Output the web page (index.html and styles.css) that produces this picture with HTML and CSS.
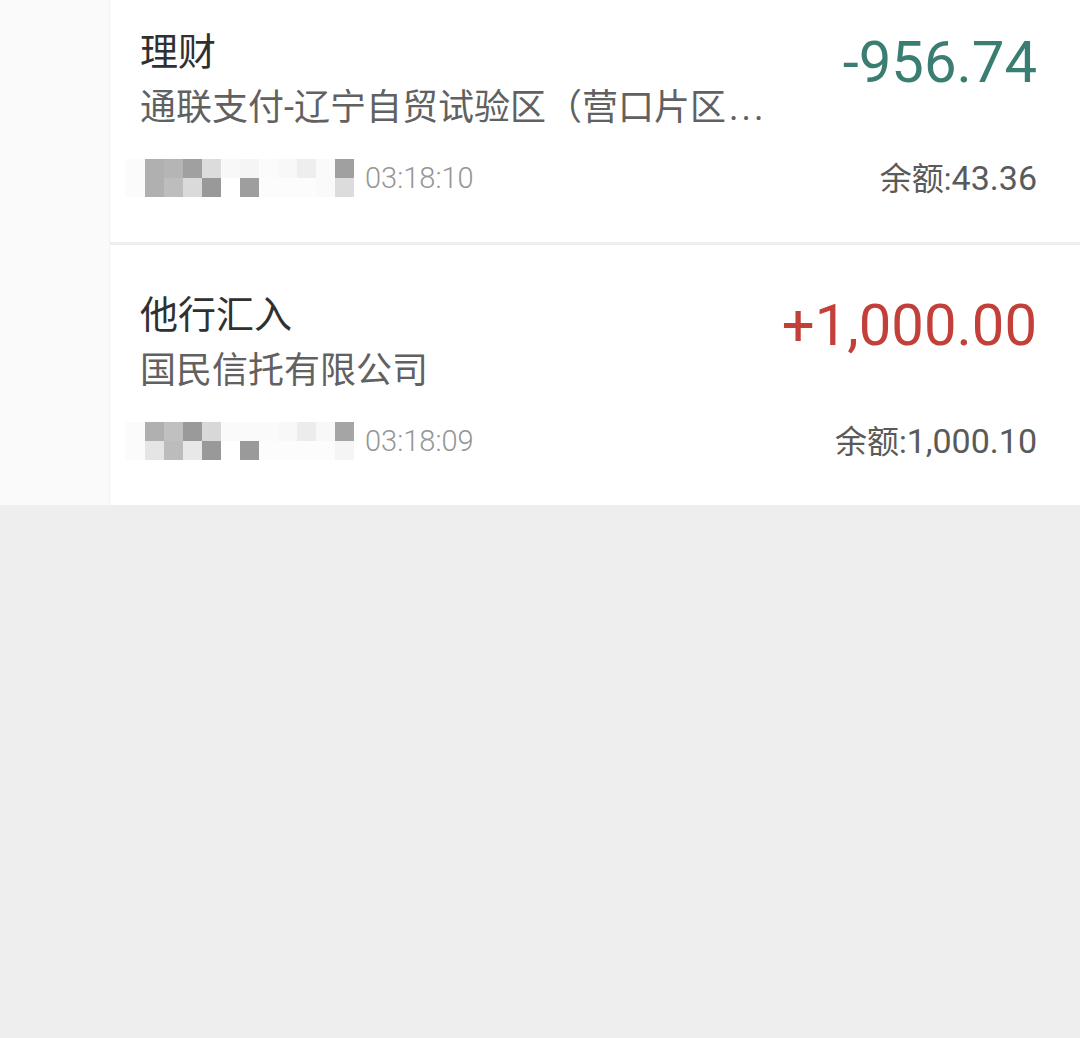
FILE: index.html
```html
<!DOCTYPE html>
<html lang="zh-CN">
<head>
<meta charset="utf-8">
<title>交易明细</title>
<link rel="stylesheet" href="styles.css">
</head>
<body>
<div class="page">
  <aside class="side"></aside>
  <div class="list">
    <div class="card first">
      <div class="top">
        <div class="info">
          <div class="title">理财</div>
          <div class="sub">通联支付-辽宁自贸试验区（营口片区<span class="dots">...</span></div>
        </div>
        <div class="amount out">-956.74</div>
      </div>
      <div class="meta">
        <div class="when">
          <div class="blur">
            <div class="mosaic">
              <i class="c-b0"></i><i class="c-b5"></i><i class="c-a0"></i><i class="c-dc"></i><i class="c-f8"></i><i class="c-f5"></i><i class="c-fb"></i><i class="c-f8"></i><i class="c-ee"></i><i class="c-fa"></i><i class="c-a0"></i>
              <i class="c-b0"></i><i class="c-bd"></i><i class="c-da"></i><i class="c-99"></i><i class="c-ff"></i><i class="c-9e"></i><i class="c-fc"></i><i class="c-fc"></i><i class="c-fc"></i><i class="c-fa"></i><i class="c-dc"></i>
            </div>
          </div>
          <span class="time">03:18:10</span>
        </div>
        <div class="balance"><span class="label">余额:</span>43.36</div>
      </div>
    </div>
    <div class="card">
      <div class="top">
        <div class="info">
          <div class="title">他行汇入</div>
          <div class="sub">国民信托有限公司</div>
        </div>
        <div class="amount in">+1,000.00</div>
      </div>
      <div class="meta">
        <div class="when">
          <div class="blur">
            <div class="mosaic">
              <i class="c-b0"></i><i class="c-c0"></i><i class="c-9a"></i><i class="c-d8"></i><i class="c-fa"></i><i class="c-fa"></i><i class="c-fa"></i><i class="c-f8"></i><i class="c-ec"></i><i class="c-f8"></i><i class="c-a5"></i>
              <i class="c-e5"></i><i class="c-bc"></i><i class="c-e8"></i><i class="c-99"></i><i class="c-ff"></i><i class="c-9a"></i><i class="c-fc"></i><i class="c-fc"></i><i class="c-fc"></i><i class="c-fc"></i><i class="c-f5"></i>
            </div>
          </div>
          <span class="time">03:18:09</span>
        </div>
        <div class="balance"><span class="label">余额:</span>1,000.10</div>
      </div>
    </div>
  </div>
</div>
</body>
</html>
```

FILE: styles.css
```css
html, body {
  margin: 0;
  padding: 0;
}
body {
  background: #eeeeee;
  font-family: Roboto, "Noto Sans CJK SC", sans-serif;
  width: 1080px;
  height: 1038px;
  overflow: hidden;
}
.page {
  display: flex;
  overflow: hidden;
  background: #ffffff;
}
.side {
  width: 109px;
  flex: none;
  background: #fafafa;
  border-right: 1px solid #f3f3f3;
}
.list {
  flex: 1;
  margin-top: -18px;
  background: #ffffff;
}
.card {
  padding: 45px 43px 44px 30px;
}
.card.first {
  border-bottom: 3px solid #eeeeee;
}
.top {
  display: flex;
  justify-content: space-between;
  align-items: flex-start;
}
.title {
  font-size: 38px;
  line-height: 50px;
  color: #303030;
}
.sub {
  font-size: 36px;
  line-height: 50px;
  margin-top: 6px;
  color: #616161;
  white-space: nowrap;
}
.dots {
  margin-left: 3px;
  letter-spacing: 3px;
}
.amount {
  font-size: 58px;
  line-height: 70px;
}
.amount.out {
  color: #3a7d72;
}
.amount.in {
  color: #c3403a;
}
.meta {
  display: flex;
  justify-content: space-between;
  align-items: center;
  height: 40px;
  margin-top: 25px;
}
.when {
  display: flex;
  align-items: center;
  gap: 11px;
}
.blur {
  margin-left: -15px;
  padding-left: 20px;
  background: #fbfbfb;
}
.mosaic {
  display: grid;
  grid-template-columns: repeat(11, 19px);
  grid-auto-rows: 19px;
}
.mosaic i {
  display: block;
}
.time {
  font-size: 29px;
  font-weight: 300;
  color: #969696;
}
.balance {
  font-size: 34px;
  line-height: 40px;
  color: #5a5a5a;
}
.balance .label {
  font-size: 32px;
}

.c-99 { background: #999999; }
.c-9a { background: #9a9a9a; }
.c-9e { background: #9e9e9e; }
.c-a0 { background: #a0a0a0; }
.c-a5 { background: #a5a5a5; }
.c-b0 { background: #b0b0b0; }
.c-b5 { background: #b5b5b5; }
.c-bc { background: #bcbcbc; }
.c-bd { background: #bdbdbd; }
.c-c0 { background: #c0c0c0; }
.c-d8 { background: #d8d8d8; }
.c-da { background: #dadada; }
.c-dc { background: #dcdcdc; }
.c-e5 { background: #e5e5e5; }
.c-e8 { background: #e8e8e8; }
.c-ec { background: #ececec; }
.c-ee { background: #eeeeee; }
.c-f5 { background: #f5f5f5; }
.c-f8 { background: #f8f8f8; }
.c-fa { background: #fafafa; }
.c-fb { background: #fbfbfb; }
.c-fc { background: #fcfcfc; }
.c-ff { background: #ffffff; }
```
